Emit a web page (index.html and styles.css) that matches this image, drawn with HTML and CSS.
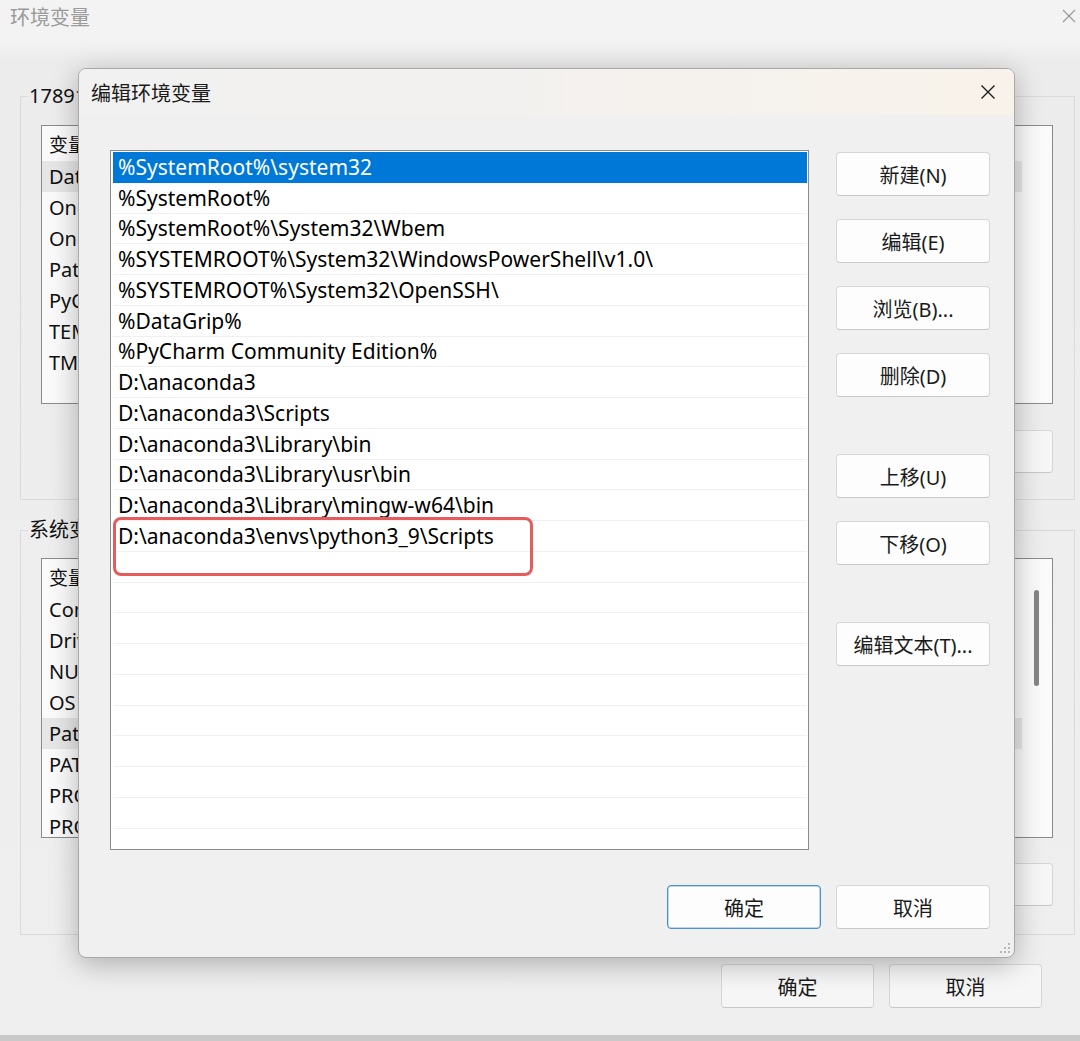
FILE: index.html
```html
<!DOCTYPE html>
<html lang="zh-CN">
<head>
<meta charset="utf-8">
<title>环境变量</title>
<link rel="stylesheet" href="styles.css">
</head>
<body>
<div class="win">
  <div class="win-title">
    <span class="win-title-text">环境变量</span>
    <svg class="win-close" width="14" height="14" viewBox="0 0 14 14"><path d="M1 1L13 13M13 1L1 13" stroke="#9a9a9a" stroke-width="1.2" fill="none"/></svg>
  </div>
  <div class="win-body">
    <fieldset class="group group-user">
      <legend>17891的用户变量(U)</legend>
      <div class="lv lv-user">
        <div class="lv-head"><span>变量</span></div>
        <div class="lv-row sel-gray"><span>DataGrip</span></div>
        <div class="lv-row"><span>OneDrive</span></div>
        <div class="lv-row"><span>OneDriveConsumer</span></div>
        <div class="lv-row"><span>Path</span></div>
        <div class="lv-row"><span>PyCharm Community Edition</span></div>
        <div class="lv-row"><span>TEMP</span></div>
        <div class="lv-row"><span>TMP</span></div>
      </div>
      <div class="grp-btns grp-btns-user">
        <button class="btn bg-btn" aria-label="新建(N)..."></button>
        <button class="btn bg-btn" aria-label="编辑(E)..."></button>
        <button class="btn bg-btn" aria-label="删除(D)"></button>
      </div>
    </fieldset>
    <fieldset class="group group-sys">
      <legend>系统变量(S)</legend>
      <div class="lv lv-sys">
        <div class="lv-head"><span>变量</span></div>
        <div class="lv-row"><span>ComSpec</span></div>
        <div class="lv-row"><span>DriverData</span></div>
        <div class="lv-row"><span>NUMBER_OF_PROCESSORS</span></div>
        <div class="lv-row"><span>OS</span></div>
        <div class="lv-row sel-gray"><span>Path</span></div>
        <div class="lv-row"><span>PATHEXT</span></div>
        <div class="lv-row"><span>PROCESSOR_ARCHITECTURE</span></div>
        <div class="lv-row"><span>PROCESSOR_IDENTIFIER</span></div>
        <div class="lv-scroll"><div class="lv-thumb"></div></div>
      </div>
      <div class="grp-btns grp-btns-sys">
        <button class="btn bg-btn" aria-label="新建(W)..."></button>
        <button class="btn bg-btn" aria-label="编辑(I)..."></button>
        <button class="btn bg-btn" aria-label="删除(L)"></button>
      </div>
    </fieldset>
  </div>
  <div class="win-foot">
    <button class="btn bg-btn foot-btn">确定</button>
    <button class="btn bg-btn foot-btn">取消</button>
  </div>

  <div class="dlg">
    <div class="dlg-title">
      <span class="dlg-title-text">编辑环境变量</span>
      <svg class="dlg-close" width="16" height="16" viewBox="0 0 16 16"><path d="M1.5 1.5L14.5 14.5M14.5 1.5L1.5 14.5" stroke="#1e1e1e" stroke-width="1.4" fill="none"/></svg>
    </div>
    <div class="dlg-body">
      <div class="plist">
        <div class="prow selected">%SystemRoot%\system32</div>
        <div class="prow">%SystemRoot%</div>
        <div class="prow">%SystemRoot%\System32\Wbem</div>
        <div class="prow">%SYSTEMROOT%\System32\WindowsPowerShell\v1.0\</div>
        <div class="prow">%SYSTEMROOT%\System32\OpenSSH\</div>
        <div class="prow">%DataGrip%</div>
        <div class="prow">%PyCharm Community Edition%</div>
        <div class="prow">D:\anaconda3</div>
        <div class="prow">D:\anaconda3\Scripts</div>
        <div class="prow">D:\anaconda3\Library\bin</div>
        <div class="prow">D:\anaconda3\Library\usr\bin</div>
        <div class="prow">D:\anaconda3\Library\mingw-w64\bin</div>
        <div class="prow">D:\anaconda3\envs\python3_9\Scripts</div>
        <div class="prow"></div>
        <div class="prow"></div>
        <div class="prow"></div>
        <div class="prow"></div>
        <div class="prow"></div>
        <div class="prow"></div>
        <div class="prow"></div>
        <div class="prow"></div>
        <div class="prow"></div>
        <div class="highlight-box"></div>
      </div>
      <div class="side-btns">
        <button class="btn">新建(N)</button>
        <button class="btn">编辑(E)</button>
        <button class="btn">浏览(B)...</button>
        <button class="btn">删除(D)</button>
        <button class="btn gap-top">上移(U)</button>
        <button class="btn">下移(O)</button>
        <button class="btn gap-top">编辑文本(T)...</button>
      </div>
    </div>
    <div class="dlg-foot">
      <button class="btn btn-default">确定</button>
      <button class="btn">取消</button>
    </div>
    <svg class="grip" width="12" height="12" viewBox="0 0 12 12">
      <rect x="9" y="1" width="2" height="2" fill="#b8b8b8"/>
      <rect x="9" y="5" width="2" height="2" fill="#b8b8b8"/>
      <rect x="5" y="5" width="2" height="2" fill="#b8b8b8"/>
      <rect x="9" y="9" width="2" height="2" fill="#b8b8b8"/>
      <rect x="5" y="9" width="2" height="2" fill="#b8b8b8"/>
      <rect x="1" y="9" width="2" height="2" fill="#b8b8b8"/>
    </svg>
  </div>
</div>
</body>
</html>
```
FILE: styles.css
```css
* { box-sizing: border-box; }
html, body { margin: 0; padding: 0; }
body {
  width: 1080px;
  height: 1041px;
  overflow: hidden;
  font-family: "Noto Sans", "Noto Sans CJK SC", sans-serif;
  font-size: 19px;
  color: #111;
  background: #c9c9c9;
}
.win {
  position: relative;
  width: 1080px;
  height: 1035px;
  background: linear-gradient(to bottom, #f3f3f3 0, #f3f3f3 40px, #ececec 60px, #efefef 100%);
  display: flex;
  flex-direction: column;
  overflow: hidden;
}
.win-title {
  height: 32px;
  display: flex;
  align-items: center;
  justify-content: space-between;
  padding: 0 4px 0 10px;
  color: #9b9b9b;
}
.win-title-text { font-size: 20px; font-family: "Noto Sans CJK SC", sans-serif; }

.group {
  border: 1px solid #dadada;
  margin: 0 5px 0 20px;
  min-width: 0;
}
.group legend {
  font-family: "Noto Sans", "Noto Sans CJK SC", sans-serif;
  line-height: 20px;
  height: 20px;
  padding: 0 1px;
  margin-left: -13px;
  font-size: 20px;
  color: #111;
  white-space: nowrap;
}
.group-user { margin-top: 54px; padding: 19px 21px 26px 20px; }
.group-sys { margin-top: 20px; padding: 18px 21px 28px 20px; }

.lv {
  position: relative;
  border: 1px solid #8a8a8a;
  background: #fafafa;
  overflow: hidden;
}
.lv-user { height: 279px; }
.lv-sys { height: 280px; }
.lv-head {
  height: 35px;
  display: flex;
  align-items: center;
  padding-left: 7px;
  font-family: "Noto Sans CJK SC", sans-serif;
}
.lv-row {
  height: 31px;
  display: flex;
  align-items: center;
  padding-left: 7px;
  margin-right: 30px;
  font-size: 20px;
  white-space: nowrap;
}
.sel-gray { background: #e6e6e6; }
.lv-scroll {
  position: absolute;
  right: 0;
  top: 0;
  bottom: 0;
  width: 30px;
}
.lv-thumb {
  position: absolute;
  left: 12px;
  top: 31px;
  width: 5px;
  height: 96px;
  border-radius: 3px;
  background: #858585;
}
.grp-btns {
  display: flex;
  justify-content: flex-end;
  gap: 15px;
}
.grp-btns-user { margin-top: 26px; }
.grp-btns-sys { margin-top: 25px; }

.btn {
  font-family: "Noto Sans", "Noto Sans CJK SC", sans-serif;
  font-size: 20px;
  color: #1a1a1a;
  background: #fdfdfd;
  border: 1px solid #d6d6d6;
  border-bottom-color: #c8c8c8;
  border-radius: 4px;
  width: 154px;
  height: 44px;
  padding: 0;
  display: flex;
  align-items: center;
  justify-content: center;
}
.bg-btn {
  width: 153px;
  height: 43px;
  background: #f6f6f6;
}
.win-foot {
  display: flex;
  justify-content: flex-end;
  gap: 15px;
  padding-right: 38px;
  margin-top: 29px;
}
.foot-btn { height: 44px; }

/* Edit dialog overlay */
.dlg {
  position: absolute;
  left: 78px;
  top: 68px;
  width: 937px;
  height: 890px;
  background: #f0f0f0;
  border: 1px solid #a9a9a9;
  border-radius: 8px;
  box-shadow: 0 6px 28px rgba(0, 0, 0, 0.28);
  display: flex;
  flex-direction: column;
  overflow: hidden;
}
.dlg-title {
  height: 46px;
  flex: none;
  display: flex;
  align-items: center;
  justify-content: space-between;
  padding: 0 18px 0 12px;
  background: linear-gradient(to right, #f1f1f1 0%, #f3f1ef 45%, #f8f2ea 100%);
}
.dlg-title-text {
  font-family: "Noto Sans CJK SC", sans-serif;
  font-size: 20px;
  color: #1a1a1a;
  padding-top: 1px;
}
.dlg-body {
  display: flex;
  gap: 27px;
  padding: 35px 24px 0 31px;
}
.plist {
  position: relative;
  width: 699px;
  height: 700px;
  flex: none;
  background: #fff;
  border: 1px solid #8c8c8c;
  padding: 1px 1px 1px 2px;
  overflow: hidden;
}
.prow {
  height: 30.75px;
  padding-left: 5px;
  display: flex;
  align-items: center;
  border-bottom: 1px solid #f0f0f0;
  white-space: nowrap;
  color: #000;
  font-size: 21px;
}
.prow.selected {
  background: #0078d7;
  color: #fff;
  border-bottom-color: #0078d7;
}
.highlight-box {
  position: absolute;
  left: 2px;
  top: 366px;
  width: 420px;
  height: 59px;
  border: 3px solid #e65c5c;
  border-radius: 8px;
}
.side-btns {
  display: flex;
  flex-direction: column;
  gap: 23px;
  padding-top: 2px;
}
.side-btns .gap-top { margin-top: 34px; }
.dlg-foot {
  display: flex;
  justify-content: flex-end;
  gap: 15px;
  padding: 35px 24px 0 0;
}
.btn-default {
  border: 1px solid #4a90d2;
  box-shadow: inset 0 0 0 0.5px #7fb2e2;
}
.grip {
  position: absolute;
  right: 3px;
  bottom: 3px;
}
```
